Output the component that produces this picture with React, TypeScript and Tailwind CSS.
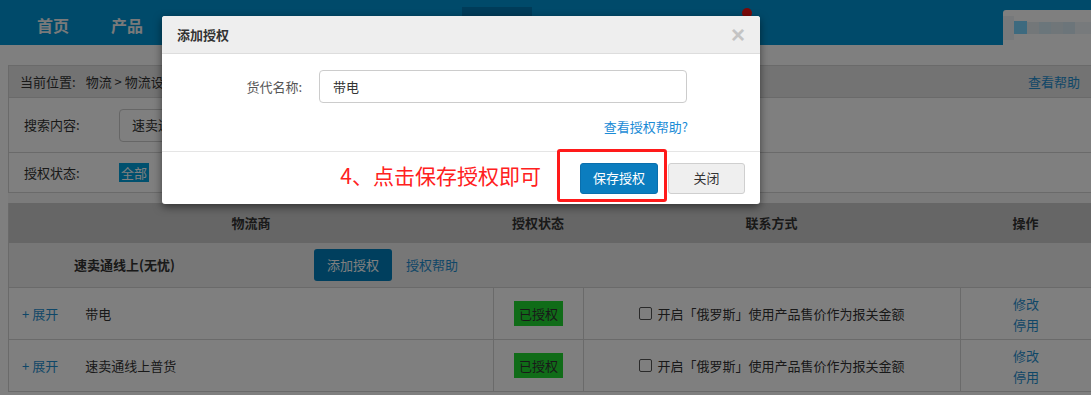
import React from "react";

const navItems = ["首页", "产品"];

const rows = ["带电", "速卖通线上普货"];

const App: React.FC = () => {
	return (
		<div className="relative w-[1091px] h-[395px] overflow-hidden bg-white font-['Noto_Sans_CJK_SC','Noto_Sans',sans-serif] text-[13px] leading-[18px] text-[#333]">
			{/* top nav */}
			<div className="relative flex h-[45px] bg-[#0094d4]">
				<div className="ml-[18px] flex gap-[4px] pt-[7px]">
					{navItems.map((n) => (
						<div key={n} className="flex h-[38px] w-[70px] justify-center pt-[8px] text-[16px] font-bold leading-[20px] text-[#f4f4f4]">
							{n}
						</div>
					))}
				</div>
				<div className="ml-[300px] mt-[7px] h-[38px] w-[70px] bg-[#0079b3]"></div>
				<div className="absolute left-[742px] top-[8px] h-[10px] w-[10px] rounded-full bg-[#f41414]"></div>
				<div className="ml-auto mt-[10px] flex h-[35px] w-[88px] items-center rounded-tl-[3px] bg-white">
					<div className="h-[24px] w-[11px] bg-[#eef3f6]"></div>
					<div className="h-[13px] w-[13px] bg-[#7ad4ff]"></div>
					<div className="h-[12px] w-[12px] bg-[#e6eef3]"></div>
					<div className="h-[12px] w-[12px] bg-[#d6ecf6]"></div>
					<div className="h-[12px] w-[12px] bg-[#e1edf3]"></div>
					<div className="h-[12px] w-[12px] bg-[#d9ebf4]"></div>
					<div className="h-[12px] w-[16px] bg-[#eef5f8]"></div>
				</div>
			</div>

			{/* page content */}
			<div className="pl-[8px] pt-[20px]">
				<div className="flex h-[33px] items-center border border-r-0 border-[#d4d4d4] bg-[#e6e6e6] pl-[11px] pr-[11px]">
					<span>当前位置:</span>
					<span className="ml-[10px]">物流 &gt; 物流设置</span>
					<span className="ml-auto text-[#1f8fd0]">查看帮助</span>
				</div>
				<div className="border-b border-l border-[#d4d4d4] bg-white">
					<div className="flex h-[55px] items-center border-b border-[#d4d4d4] pl-[15px]">
						<span className="w-[95px]">搜索内容:</span>
						<div className="flex h-[33px] w-[220px] items-center rounded-[4px] border border-[#ccc] pl-[12px]">速卖通</div>
					</div>
					<div className="flex h-[39px] items-center pl-[15px]">
						<span className="w-[95px]">授权状态:</span>
						<span className="flex h-[19px] items-center bg-[#00a0dc] px-[2px] text-white">全部</span>
					</div>
				</div>
				<div className="h-[10px] bg-[#f6f6f6]"></div>

				{/* table */}
				<div className="border-l border-[#d4d4d4]">
					<div className="grid h-[40px] grid-cols-[484px_90px_377px_1fr] items-center bg-[#cccccc] font-bold">
						<div className="text-center">物流商</div>
						<div className="text-center">授权状态</div>
						<div className="text-center">联系方式</div>
						<div className="text-center">操作</div>
					</div>
					<div className="flex h-[45px] items-center border-b border-[#d4d4d4] bg-[#eeeeee]">
						<div className="w-[305px] pl-[65px] font-bold">速卖通线上(无忧)</div>
						<div className="flex h-[32px] w-[78px] items-center justify-center rounded-[3px] bg-[#007ebc] text-white">添加授权</div>
						<span className="ml-[14px] text-[#1f8fd0]">授权帮助</span>
					</div>
					{rows.map((r) => (
						<div key={r} className="grid h-[52px] grid-cols-[484px_90px_377px_1fr] border-b border-[#d4d4d4] bg-white">
							<div className="flex items-center pl-[13px]">
								<span className="text-[#1f8fd0]">+ 展开</span>
								<span className="ml-[27px]">{r}</span>
							</div>
							<div className="flex items-center justify-center border-l border-[#d4d4d4]">
								<span className="flex h-[25px] w-[49px] items-center justify-center bg-[#20d830]">已授权</span>
							</div>
							<div className="flex items-center justify-center gap-[5px] border-l border-[#d4d4d4]">
								<span className="h-[13px] w-[13px] rounded-[2px] border border-[#555] bg-white"></span>
								<span>开启「俄罗斯」使用产品售价作为报关金额</span>
							</div>
							<div className="flex flex-col items-center justify-center border-l border-[#d4d4d4] leading-[21px] text-[#1f8fd0]">
								<span>修改</span>
								<span>停用</span>
							</div>
						</div>
					))}
				</div>
			</div>

			{/* backdrop */}
			<div className="absolute inset-0 bg-black/50"></div>

			{/* dialog */}
			<div className="absolute left-[162px] top-[16px] w-[598px] rounded-[3px] bg-white shadow-[0_3px_9px_rgba(0,0,0,0.5)]">
				<div className="flex h-[38px] items-center rounded-t-[3px] border-b border-[#dddddd] bg-[#eeeeee] pl-[15px] pr-[15px]">
					<span className="font-bold text-[#333]">添加授权</span>
					<span className="ml-auto font-['Liberation_Sans',sans-serif] text-[24px] font-bold leading-[20px] text-[#c4c4c4]">×</span>
				</div>
				<div className="pb-[15px] pt-[16px]">
					<div className="flex items-center">
						<span className="w-[140px] text-right text-[#555]">货代名称:</span>
						<div className="ml-[17px] flex h-[33px] w-[368px] items-center rounded-[4px] border border-[#cccccc] pl-[13px] text-[#333]">带电</div>
					</div>
					<div className="mt-[15px] pr-[72px] text-right text-[#1a8bd6]">查看授权帮助?</div>
				</div>
				<div className="relative flex items-center justify-end border-t border-[#e5e5e5] pb-[10px] pl-[15px] pr-[15px] pt-[10px]">
					<span className="pb-[6px] text-[21px] leading-[26px] text-[#ff2020]">4、点击保存授权即可</span>
					<div className="ml-[39px] flex h-[31px] w-[78px] items-center justify-center rounded-[3px] border border-[#0a6fad] bg-[#0b7dbf] text-white">保存授权</div>
					<div className="ml-[10px] flex h-[31px] w-[77px] items-center justify-center rounded-[3px] border border-[#cfcfcf] bg-[#efefef] text-[#333]">关闭</div>
					<div className="absolute left-[395px] top-[-3px] h-[53px] w-[110px] rounded-[3px] border-[3px] border-[#ff1a1a]"></div>
				</div>
			</div>
		</div>
	);
};

export default App;
